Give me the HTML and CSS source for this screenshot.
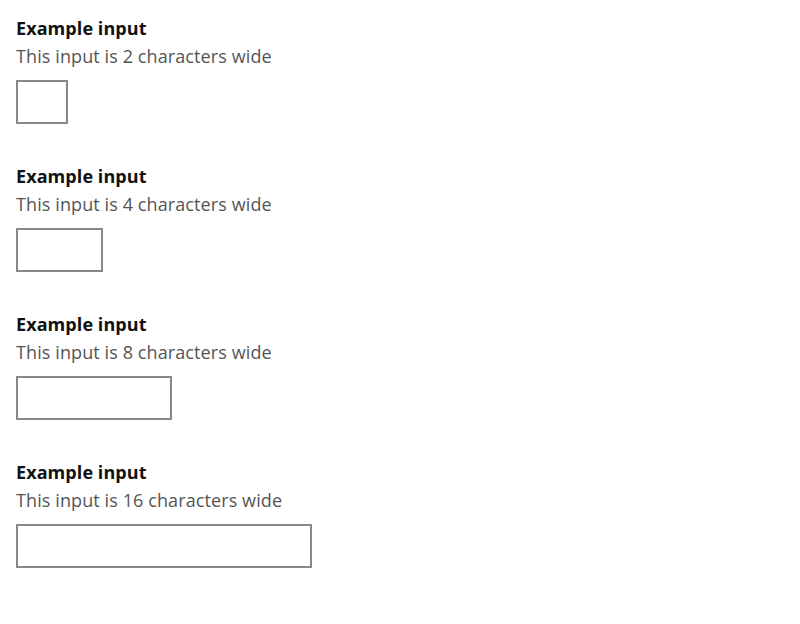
FILE: index.html
```html
<!DOCTYPE html>
<html>
<head>
<meta charset="utf-8">
<link rel="stylesheet" href="styles.css">
</head>
<body>
<div class="page">
  <div class="field">
    <label class="label" for="i2">Example input</label>
    <div class="hint">This input is 2 characters wide</div>
    <input class="input w2" id="i2" type="text">
  </div>
  <div class="field">
    <label class="label" for="i4">Example input</label>
    <div class="hint">This input is 4 characters wide</div>
    <input class="input w4" id="i4" type="text">
  </div>
  <div class="field">
    <label class="label" for="i8">Example input</label>
    <div class="hint">This input is 8 characters wide</div>
    <input class="input w8" id="i8" type="text">
  </div>
  <div class="field">
    <label class="label" for="i16">Example input</label>
    <div class="hint">This input is 16 characters wide</div>
    <input class="input w16" id="i16" type="text">
  </div>
</div>
</body>
</html>
```
FILE: styles.css
```css
html, body {
  margin: 0;
  padding: 0;
  background: #fff;
}
.page {
  padding: 14px 16px;
  font-family: "Open Sans", "Liberation Sans", sans-serif;
  font-size: 18px;
  line-height: 28px;
}
.field {
  display: flex;
  flex-direction: column;
  align-items: flex-start;
  margin-bottom: 38px;
}
.label {
  font-weight: 700;
  color: #111;
  letter-spacing: 0.08px;
}
.hint {
  color: #555;
  margin-bottom: 10px;
  letter-spacing: 0.1px;
}
.input {
  box-sizing: border-box;
  height: 44px;
  margin: 0;
  border: 2px solid #888;
  border-radius: 0;
  padding: 0 8px;
  font: inherit;
  background: #fff;
}
.w2 { width: 52px; }
.w4 { width: 87px; }
.w8 { width: 156px; }
.w16 { width: 296px; }
```
